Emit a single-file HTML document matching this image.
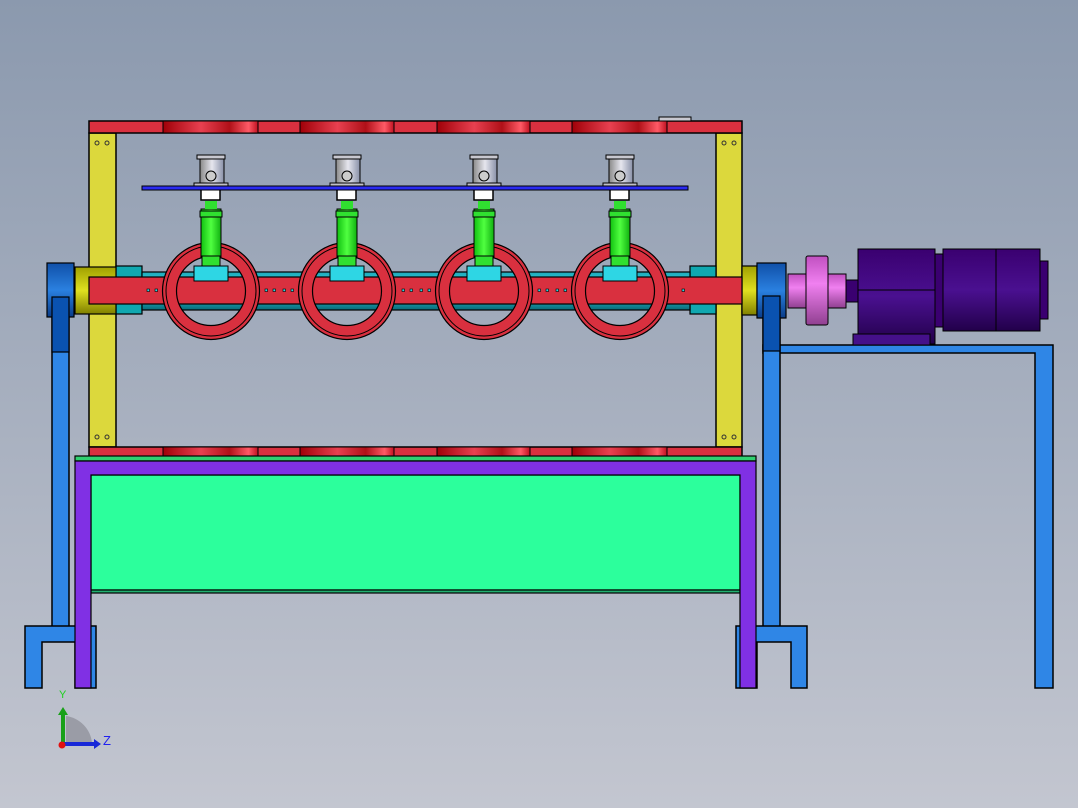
<!DOCTYPE html><html><head><style>html,body{margin:0;padding:0;width:1078px;height:808px;overflow:hidden}</style></head><body>
<svg width="1078" height="808" viewBox="0 0 1078 808" xmlns="http://www.w3.org/2000/svg" font-family="Liberation Sans, sans-serif">
<defs>
<linearGradient id="bg" x1="0" y1="0" x2="0" y2="1"><stop offset="0" stop-color="#8b99ae"/><stop offset="1" stop-color="#c3c6d0"/></linearGradient>
<linearGradient id="rs" x1="0" y1="0" x2="1" y2="0"><stop offset="0" stop-color="#a00008"/><stop offset=".4" stop-color="#e84050"/><stop offset=".7" stop-color="#b01018"/><stop offset=".9" stop-color="#ff5a66"/><stop offset="1" stop-color="#c01020"/></linearGradient>
<linearGradient id="cy" x1="0" y1="0" x2="0" y2="1"><stop offset="0" stop-color="#20a8b8"/><stop offset=".45" stop-color="#30e8f8"/><stop offset="1" stop-color="#0a6a78"/></linearGradient>
<linearGradient id="gr" x1="0" y1="0" x2="1" y2="0"><stop offset="0" stop-color="#10c010"/><stop offset=".5" stop-color="#50ff40"/><stop offset="1" stop-color="#10b010"/></linearGradient>
<linearGradient id="sv" x1="0" y1="0" x2="1" y2="0"><stop offset="0" stop-color="#888"/><stop offset=".5" stop-color="#e6e6ee"/><stop offset="1" stop-color="#8890a8"/></linearGradient>
<linearGradient id="pk" x1="0" y1="0" x2="0" y2="1"><stop offset="0" stop-color="#c050c0"/><stop offset=".4" stop-color="#f080f0"/><stop offset="1" stop-color="#904090"/></linearGradient>
<linearGradient id="pu" x1="0" y1="0" x2="0" y2="1"><stop offset="0" stop-color="#3a0070"/><stop offset=".5" stop-color="#4a1090"/><stop offset="1" stop-color="#22004a"/></linearGradient>
<linearGradient id="bl" x1="0" y1="0" x2="0" y2="1"><stop offset="0" stop-color="#1050a8"/><stop offset=".5" stop-color="#2a80e0"/><stop offset="1" stop-color="#0a3c88"/></linearGradient>
<linearGradient id="yl" x1="0" y1="0" x2="0" y2="1"><stop offset="0" stop-color="#a0a000"/><stop offset=".5" stop-color="#e0e020"/><stop offset="1" stop-color="#808000"/></linearGradient>
</defs>
<rect width="1078" height="808" fill="url(#bg)"/>
<g stroke="#000" stroke-width="1.5">
<!-- right table -->
<path d="M763 345H1053V688H1035V353H763Z" fill="#2f86e6"/>
<!-- blue legs -->
<rect x="52" y="297" width="17" height="330" fill="#2f86e6"/>
<rect x="763" y="296" width="17" height="331" fill="#2f86e6"/>
<path d="M25 626H96V688H75V642H42V688H25Z" fill="#2f86e6"/>
<path d="M736 626H807V688H791V642H757V688H736Z" fill="#2f86e6"/>
<!-- yellow posts -->
<rect x="89" y="133" width="27" height="314" fill="#dcd83c"/>
<rect x="716" y="133" width="26" height="314" fill="#dcd83c"/>
<!-- red bars -->
<rect x="89" y="121" width="653" height="12" fill="#d9303f"/>
<rect x="89" y="447" width="653" height="10" fill="#d9303f"/>
</g>
<g stroke="#000" stroke-width="1">
<rect x="163" y="121" width="95" height="12" fill="url(#rs)"/><rect x="300" y="121" width="94" height="12" fill="url(#rs)"/><rect x="437" y="121" width="93" height="12" fill="url(#rs)"/><rect x="572" y="121" width="95" height="12" fill="url(#rs)"/>
<rect x="163" y="447" width="95" height="10" fill="url(#rs)"/><rect x="300" y="447" width="94" height="10" fill="url(#rs)"/><rect x="437" y="447" width="93" height="10" fill="url(#rs)"/><rect x="572" y="447" width="95" height="10" fill="url(#rs)"/>
<rect x="659" y="117" width="32" height="4" fill="#c8c8d0"/>
</g>
<g fill="none" stroke="#333" stroke-width="1"><circle cx="97" cy="143" r="2"/><circle cx="107" cy="143" r="2"/><circle cx="97" cy="437" r="2"/><circle cx="107" cy="437" r="2"/><circle cx="724" cy="143" r="2"/><circle cx="734" cy="143" r="2"/><circle cx="724" cy="437" r="2"/><circle cx="734" cy="437" r="2"/></g>
<g stroke="#000" stroke-width="1.2">
<!-- cyan tube -->
<rect x="116" y="266" width="26" height="48" fill="#10a8b0"/>
<rect x="690" y="266" width="26" height="48" fill="#10a8b0"/>
<rect x="142" y="272" width="548" height="38" fill="url(#cy)"/>
<!-- collars and hubs -->
<rect x="75" y="267" width="41" height="47" fill="url(#yl)"/>
<rect x="742" y="266" width="15" height="49" fill="url(#yl)"/>
<rect x="47" y="263" width="27" height="54" fill="url(#bl)"/>
<rect x="757" y="263" width="29" height="55" fill="url(#bl)"/>
<rect x="52" y="297" width="17" height="55" fill="#0a52b0"/>
<rect x="763" y="296" width="17" height="55" fill="#0a52b0"/>
<!-- red beam -->
<rect x="89" y="277" width="653" height="27" fill="#d9303f"/>
</g>
<!-- rings & valves -->
<g id="v">
<circle cx="211" cy="291" r="41.5" fill="none" stroke="#d9303f" stroke-width="14"/>
<circle cx="211" cy="291" r="48.5" fill="none" stroke="#000" stroke-width="1.2"/>
<circle cx="211" cy="291" r="45" fill="none" stroke="#000" stroke-width="1"/>
<circle cx="211" cy="291" r="34.5" fill="none" stroke="#000" stroke-width="1.2"/>
<rect x="201" y="209" width="20" height="48" fill="url(#gr)" stroke="#000"/>
<rect x="200" y="211" width="22" height="6" fill="#30e030" stroke="#000"/>
<rect x="205" y="201" width="12" height="8" fill="#30e030"/>
<rect x="202" y="256" width="18" height="10" fill="#30e030" stroke="#000"/>
<rect x="194" y="266" width="34" height="15" fill="#2ed6e4" stroke="#000"/>
<rect x="200" y="155" width="24" height="30" fill="url(#sv)" stroke="#000"/>
<rect x="197" y="155" width="28" height="4" fill="#c8c8d0" stroke="#000"/>
<rect x="194" y="183" width="34" height="3" fill="#c0c0c8" stroke="#000"/>
<circle cx="211" cy="176" r="5" fill="#ccc" stroke="#000"/>
<path d="M201 190V200H220V190" fill="#fff" stroke="#000" stroke-width="1.5"/>
</g>
<use href="#v" x="136"/><use href="#v" x="273"/><use href="#v" x="409"/>
<rect x="142" y="186" width="546" height="4" fill="#2a2af0" stroke="#000" stroke-width="1"/>
<g fill="#2ed6e4" stroke="#000" stroke-width=".6"><rect x="147" y="289" width="2.5" height="2.5"/><rect x="155" y="289" width="2.5" height="2.5"/><rect x="265" y="289" width="2.5" height="2.5"/><rect x="273" y="289" width="2.5" height="2.5"/><rect x="283" y="289" width="2.5" height="2.5"/><rect x="291" y="289" width="2.5" height="2.5"/><rect x="402" y="289" width="2.5" height="2.5"/><rect x="410" y="289" width="2.5" height="2.5"/><rect x="420" y="289" width="2.5" height="2.5"/><rect x="428" y="289" width="2.5" height="2.5"/><rect x="538" y="289" width="2.5" height="2.5"/><rect x="546" y="289" width="2.5" height="2.5"/><rect x="556" y="289" width="2.5" height="2.5"/><rect x="564" y="289" width="2.5" height="2.5"/><rect x="682" y="289" width="2.5" height="2.5"/></g>
<!-- motor -->
<g stroke="#000" stroke-width="1">
<rect x="788" y="274" width="18" height="34" fill="url(#pk)"/>
<rect x="806" y="256" width="22" height="69" fill="url(#pk)" rx="2"/>
<rect x="828" y="274" width="18" height="34" fill="url(#pk)"/>
<rect x="846" y="280" width="12" height="22" fill="#3a0070"/>
<rect x="858" y="249" width="77" height="95" fill="url(#pu)"/>
<line x1="858" y1="290" x2="935" y2="290"/>
<rect x="853" y="334" width="77" height="11" fill="#45108a"/>
<rect x="935" y="254" width="8" height="73" fill="#3a0070"/>
<rect x="943" y="249" width="53" height="82" fill="url(#pu)"/>
<rect x="996" y="249" width="44" height="82" fill="url(#pu)"/>
<rect x="1040" y="261" width="8" height="58" fill="#3a0070"/>
</g>
<!-- purple table -->
<g stroke="#000" stroke-width="1.2">
<rect x="75" y="456" width="681" height="5" fill="#30d070"/>
<rect x="91" y="475" width="649" height="115" fill="#2cff9c"/>
<rect x="91" y="590" width="649" height="3" fill="#20b070"/>
<path d="M75 461H756V688H740V475H91V688H75Z" fill="#8030e4"/>
</g>
<!-- axis -->
<path d="M66 740V716A30 30 0 0 1 92 743H66Z" fill="#9a9ca6"/>
<line x1="63" y1="744" x2="63" y2="713" stroke="#18a018" stroke-width="4"/>
<path d="M58 715L63 707L68 715Z" fill="#18a018"/>
<line x1="63" y1="744" x2="95" y2="744" stroke="#1828d8" stroke-width="4"/>
<path d="M94 739L101 744L94 749Z" fill="#1828d8"/>
<circle cx="62" cy="745" r="3.5" fill="#e01010"/>
<text x="59" y="698" font-size="11" fill="#20d020">Y</text>
<text x="103" y="745" font-size="13" fill="#2020f0">Z</text>
</svg>
</body></html>
